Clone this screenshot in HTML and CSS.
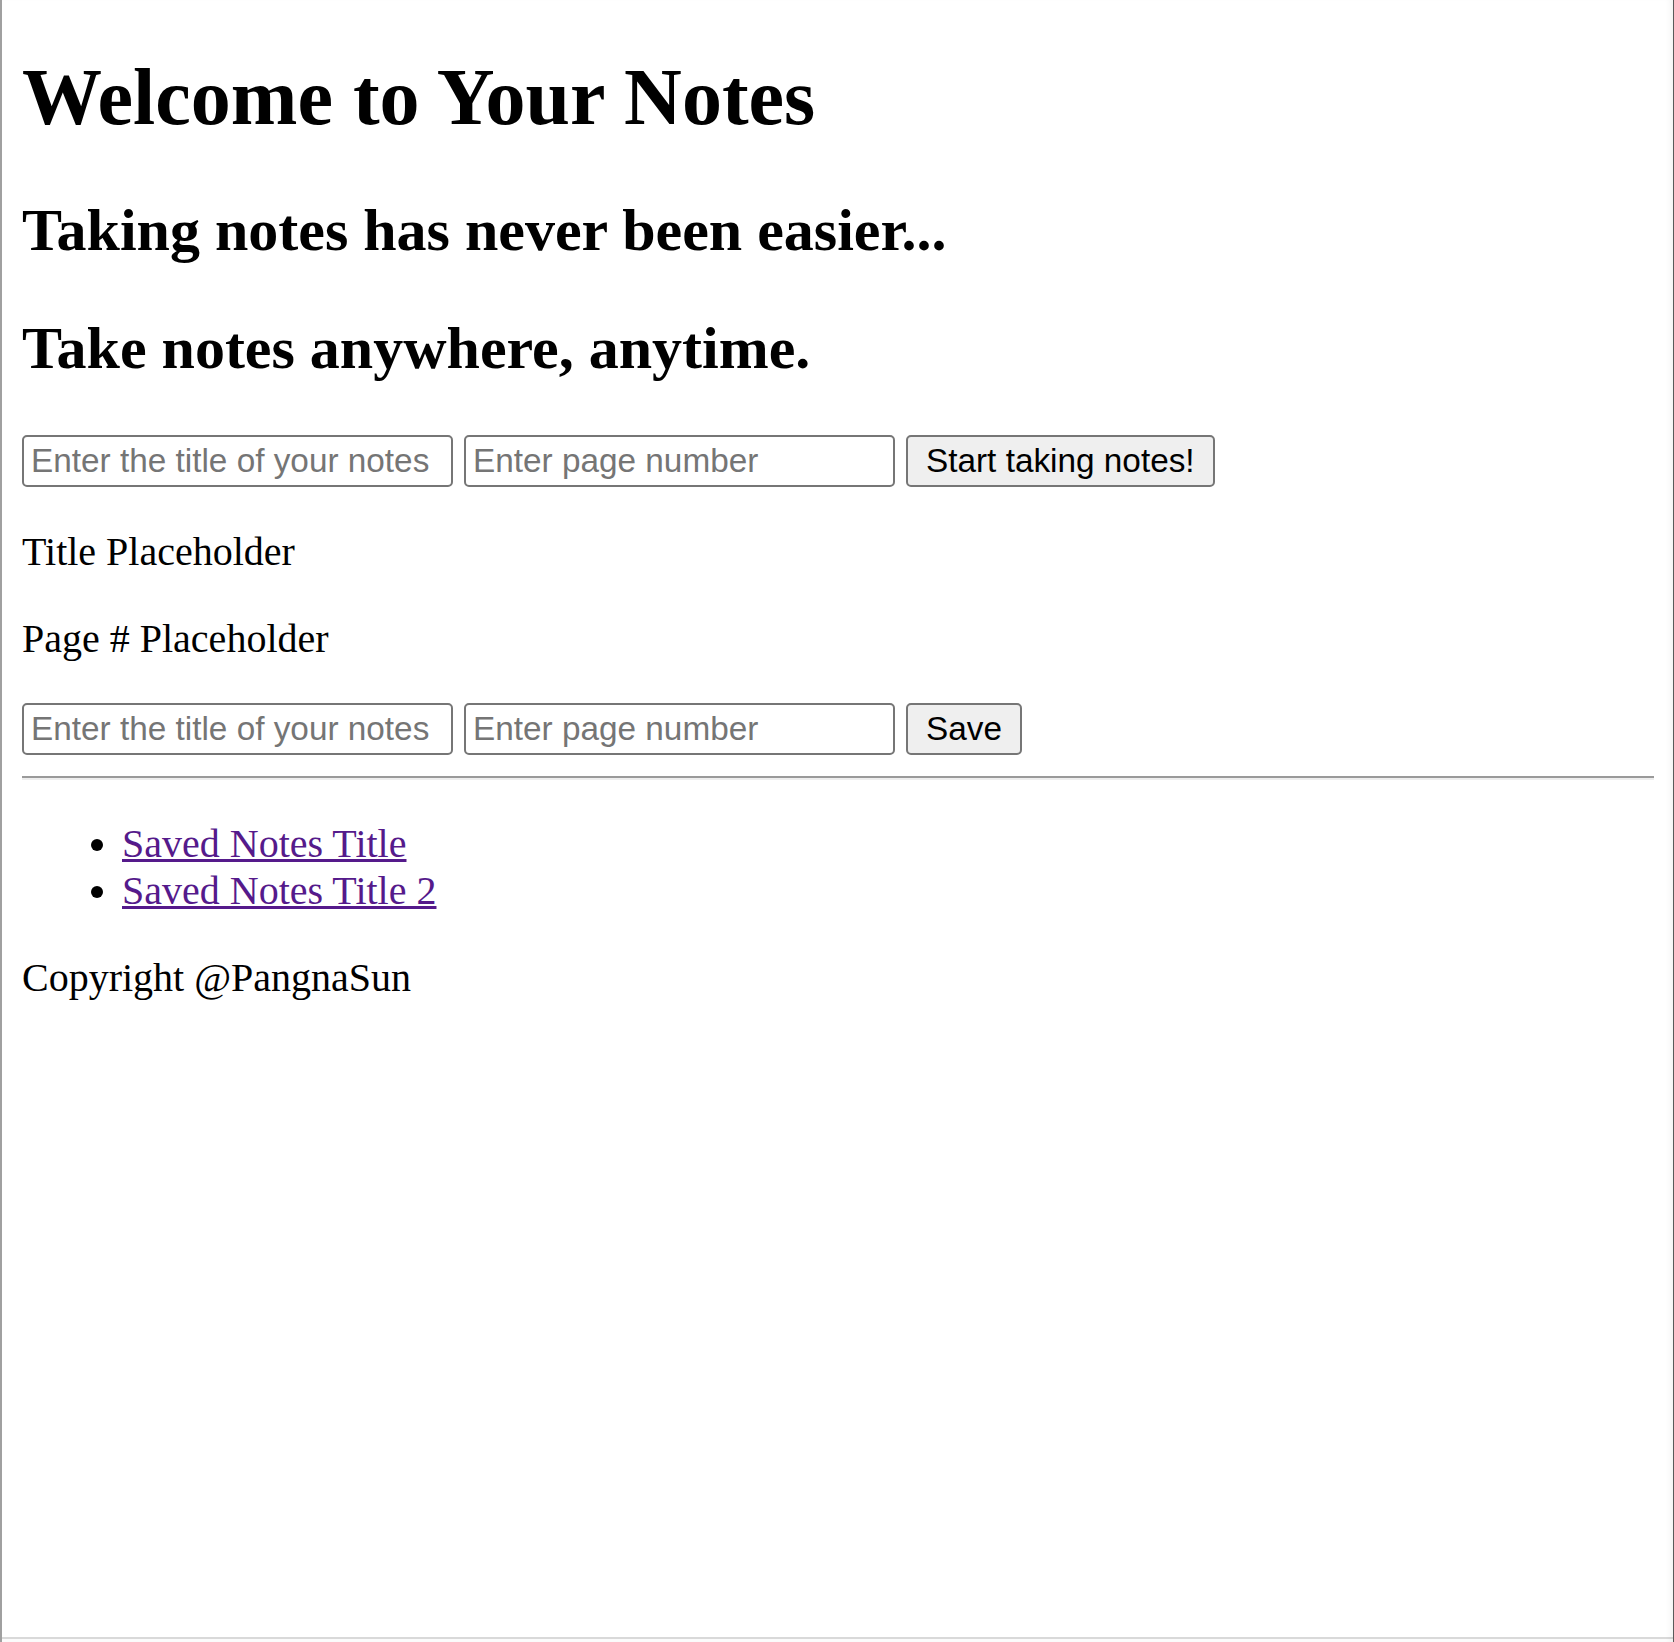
FILE: index.html
```html
<!DOCTYPE html>
<html lang="en">
<head>
<meta charset="utf-8">
<title>Notes</title>
<link rel="stylesheet" href="styles.css">
</head>
<body class="body">
<div class="frame">
  <h1 class="title">Welcome to Your Notes</h1>
  <h2 class="subtitle">Taking notes has never been easier...</h2>
  <h2 class="subtitle subtitle-last">Take notes anywhere, anytime.</h2>
  <form class="row row-start">
    <input class="field" type="text" placeholder="Enter the title of your notes">
    <input class="field" type="text" placeholder="Enter page number">
    <button class="btn" type="button">Start taking notes!</button>
  </form>
  <p class="text">Title Placeholder</p>
  <p class="text">Page # Placeholder</p>
  <form class="row row-save">
    <input class="field" type="text" placeholder="Enter the title of your notes">
    <input class="field" type="text" placeholder="Enter page number">
    <button class="btn" type="button">Save</button>
  </form>
  <hr class="rule">
  <ul class="list">
    <li class="item"><a class="link" href="#">Saved Notes Title</a></li>
    <li class="item"><a class="link" href="#">Saved Notes Title 2</a></li>
  </ul>
  <p class="text">Copyright @PangnaSun</p>
</div>
</body>
</html>
```
FILE: styles.css
```css
html, .body {
  margin: 0;
  padding: 0;
  background: #ffffff;
}

.body {
  font-family: "Liberation Serif", "Times New Roman", serif;
  color: #000000;
}

.frame {
  display: flow-root;
  box-sizing: border-box;
  min-height: 1642px;
  padding: 0 20px;
  border-left: 2px solid #a0a0a0;
  box-shadow:
    inset -1px 0 0 #5a5a5a,
    inset -7px 0 6px -4px rgba(0, 0, 0, 0.06),
    inset 0 -3px 0 #fbfbfb,
    inset 0 -5px 0 #d9d9d9;
}

.title {
  font-size: 80px;
  font-weight: bold;
  line-height: normal;
  margin: 52px 0 53px;
}

.subtitle {
  font-size: 60px;
  font-weight: bold;
  line-height: normal;
  margin: 0 0 49px;
}

.subtitle-last {
  margin-bottom: 52px;
}

.row {
  display: flex;
  align-items: flex-start;
  gap: 11px;
  height: 52px;
  margin: 0;
}

.row-start {
  height: 53px;
}

.row-save {
  margin-top: 41px;
}

.field {
  box-sizing: border-box;
  width: 431px;
  height: 52px;
  margin: 0;
  padding: 0 7px;
  border: 2px solid #767676;
  border-radius: 5px;
  background: #ffffff;
  font-family: "Liberation Sans", Arial, sans-serif;
  font-size: 33.33px;
  color: #000000;
}

.field::placeholder {
  color: #757575;
  opacity: 1;
}

.btn {
  box-sizing: border-box;
  height: 52px;
  margin: 0;
  padding: 0 18px;
  border: 2px solid #767676;
  border-radius: 5px;
  background: #efefef;
  font-family: "Liberation Sans", Arial, sans-serif;
  font-size: 33.33px;
  color: #000000;
}

.text {
  font-size: 40px;
  line-height: normal;
  margin: 40px 0;
}

.rule {
  height: 0;
  margin: 21px 0 20px;
  border: 0;
  border-top: 2.5px solid #9a9a9a;
  border-bottom: 2.5px solid #eeeeee;
}

.list {
  margin: 40px 0;
  padding-left: 100px;
  font-size: 40px;
  line-height: normal;
}

.link {
  color: #551a8b;
  text-decoration: underline;
  text-decoration-thickness: 2.5px;
}
```
